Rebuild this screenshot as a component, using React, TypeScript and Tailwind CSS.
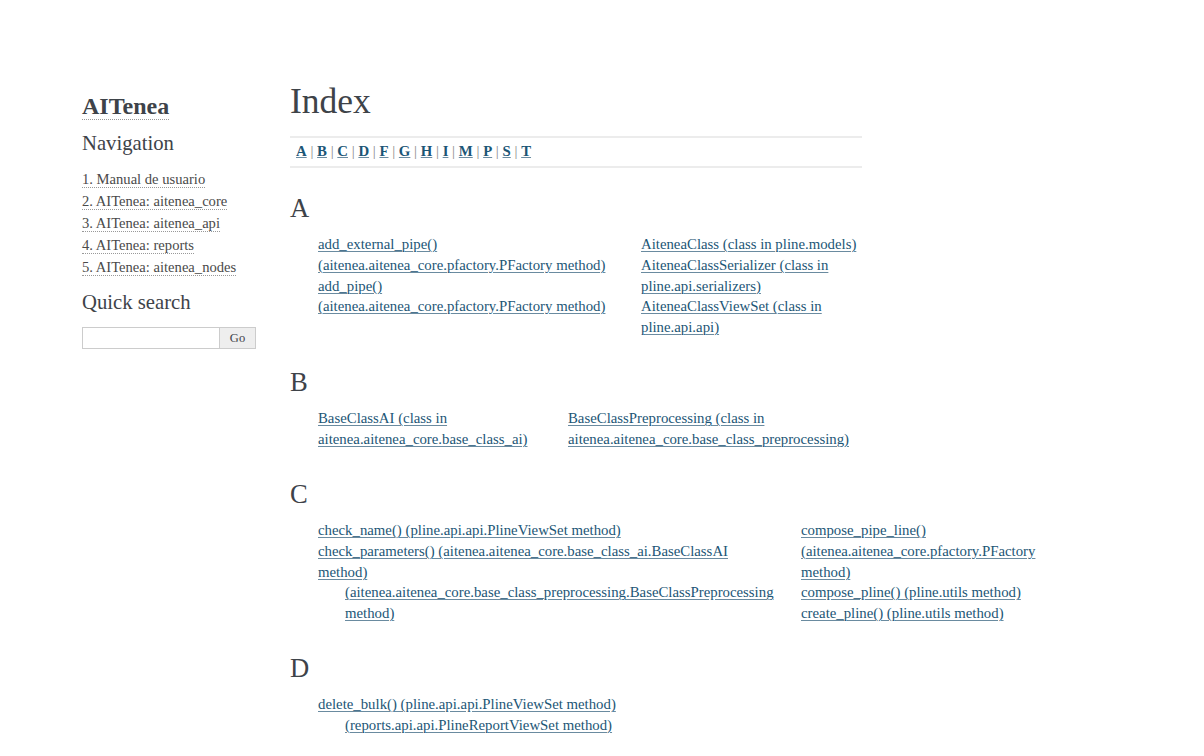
import React from 'react';

type Entry = {
  text: string;
  subs?: string[];
};

type Section = {
  letter: string;
  colWidth: number;
  columns: Entry[][];
};

const navLinks = [
  '1. Manual de usuario',
  '2. AITenea: aitenea_core',
  '3. AITenea: aitenea_api',
  '4. AITenea: reports',
  '5. AITenea: aitenea_nodes',
];

const jumpLetters = ['A', 'B', 'C', 'D', 'F', 'G', 'H', 'I', 'M', 'P', 'S', 'T'];

const sections: Section[] = [
  {
    letter: 'A',
    colWidth: 323,
    columns: [
      [
        { text: 'add_external_pipe()\n(aitenea.aitenea_core.pfactory.PFactory method)' },
        { text: 'add_pipe()\n(aitenea.aitenea_core.pfactory.PFactory method)' },
      ],
      [
        { text: 'AiteneaClass (class in pline.models)' },
        { text: 'AiteneaClassSerializer (class in\npline.api.serializers)' },
        { text: 'AiteneaClassViewSet (class in\npline.api.api)' },
      ],
    ],
  },
  {
    letter: 'B',
    colWidth: 250,
    columns: [
      [{ text: 'BaseClassAI (class in\naitenea.aitenea_core.base_class_ai)' }],
      [{ text: 'BaseClassPreprocessing (class in\naitenea.aitenea_core.base_class_preprocessing)' }],
    ],
  },
  {
    letter: 'C',
    colWidth: 483,
    columns: [
      [
        { text: 'check_name() (pline.api.api.PlineViewSet method)' },
        {
          text: 'check_parameters() (aitenea.aitenea_core.base_class_ai.BaseClassAI\nmethod)',
          subs: ['(aitenea.aitenea_core.base_class_preprocessing.BaseClassPreprocessing\nmethod)'],
        },
      ],
      [
        { text: 'compose_pipe_line()\n(aitenea.aitenea_core.pfactory.PFactory\nmethod)' },
        { text: 'compose_pline() (pline.utils method)' },
        { text: 'create_pline() (pline.utils method)' },
      ],
    ],
  },
  {
    letter: 'D',
    colWidth: 483,
    columns: [
      [
        {
          text: 'delete_bulk() (pline.api.api.PlineViewSet method)',
          subs: ['(reports.api.api.PlineReportViewSet method)'],
        },
      ],
    ],
  },
];

function IndexLink({ text }: { text: string }) {
  return (
    <a
      href="#"
      className="text-[#1c5676] underline decoration-[#6a8ba0] decoration-1 underline-offset-[2px] whitespace-pre-line"
    >
      {text}
    </a>
  );
}

function Sidebar() {
  return (
    <div className="w-[208px] shrink-0 pt-[94px]">
      <h1 className="text-[24px] leading-[24px] font-bold text-[#3E4349]">
        <a href="#" className="border-b border-dotted border-[#999]">
          AITenea
        </a>
      </h1>

      <h3 className="mt-[15px] text-[20.7px] leading-[20.7px] text-[#3E4349]">Navigation</h3>
      <ul className="mt-[14px] text-[14.6px] leading-[22px]">
        {navLinks.map((link) => (
          <li key={link}>
            <a href="#" className="text-[#4a4a4a] border-b border-dotted border-[#999]">
              {link}
            </a>
          </li>
        ))}
      </ul>

      <h3 className="mt-[14px] text-[20.7px] leading-[20.7px] text-[#3E4349]">Quick search</h3>
      <div className="mt-[15px] flex h-[22px] w-[174px]">
        <input
          type="text"
          className="w-[138px] h-full border border-[#ccc] bg-white outline-none"
        />
        <button className="w-[36px] h-full border border-l-0 border-[#ccc] bg-[#eeeeee] text-[12.5px] text-[#3E4349]">
          Go
        </button>
      </div>
    </div>
  );
}

export default function App() {
  return (
    <div
      className="min-h-screen bg-white text-[#3E4349]"
      style={{ fontFamily: '"Liberation Serif", "Times New Roman", serif' }}
    >
      <div className="flex pl-[82px]">
        <Sidebar />

        <div className="pt-[84px] w-[572px]">
          <h1 className="text-[35.5px] leading-[35.5px] text-[#3E4349]">Index</h1>

          {/* Jump box */}
          <div className="mt-[16px] border-y-2 border-[#ececec] px-[6px] text-[14.8px] leading-[27px] pb-px whitespace-nowrap">
            {jumpLetters.map((l, i) => (
              <React.Fragment key={l}>
                <a href="#" className="font-bold text-[#1c5676] underline decoration-[#6a8ba0]">
                  {l}
                </a>
                {i < jumpLetters.length - 1 && <span className="text-[#888]"> | </span>}
              </React.Fragment>
            ))}
          </div>

          {/* Sections */}
          {sections.map((section, si) => (
            <div key={section.letter} className={si === 0 ? 'mt-[27px]' : 'mt-[31px]'}>
              <h2 className="text-[26.6px] leading-[26.6px] text-[#3E4349]">{section.letter}</h2>
              <div className="mt-[13px] flex pl-[28px] text-[14.8px] leading-[20.7px] whitespace-nowrap">
                {section.columns.map((col, ci) => (
                  <ul
                    key={ci}
                    className="shrink-0"
                    style={ci === 0 && section.columns.length > 1 ? { width: section.colWidth } : undefined}
                  >
                    {col.map((entry) => (
                      <li key={entry.text}>
                        <IndexLink text={entry.text} />
                        {entry.subs && (
                          <ul className="pl-[27px]">
                            {entry.subs.map((s) => (
                              <li key={s}>
                                <IndexLink text={s} />
                              </li>
                            ))}
                          </ul>
                        )}
                      </li>
                    ))}
                  </ul>
                ))}
              </div>
            </div>
          ))}
        </div>
      </div>
    </div>
  );
}
